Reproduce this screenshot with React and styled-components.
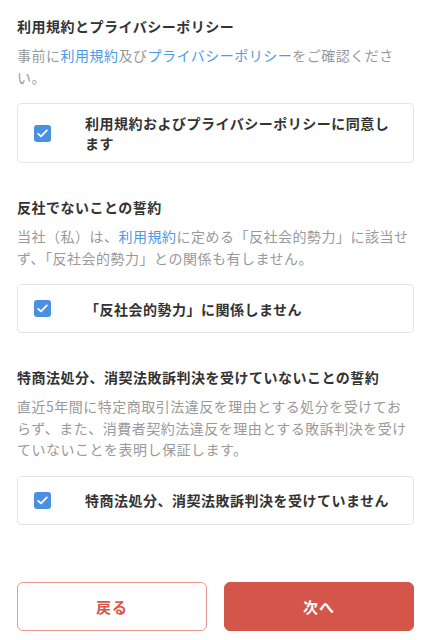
import React from "react";
import styled, { createGlobalStyle } from "styled-components";

const GlobalStyle = createGlobalStyle`
  html, body { margin: 0; padding: 0; background: #ffffff; }
  body {
    font-family: "Noto Sans CJK JP", "Noto Sans", sans-serif;
    -webkit-font-smoothing: antialiased;
  }
  * { box-sizing: border-box; }
`;

const Page = styled.div`
  width: 431px;
  min-height: 640px;
  padding: 16px 17px 10px 17px;
  display: flex;
  flex-direction: column;
`;

const Section = styled.section`
  & + & { margin-top: 34px; }
`;

const Title = styled.h2`
  margin: 0;
  font-size: 14px;
  letter-spacing: 0.5px;
  line-height: 20px;
  font-weight: 700;
  color: #333333;
`;

const Desc = styled.p`
  margin: 9px 0 0;
  font-size: 14px;
  letter-spacing: 0.5px;
  line-height: 21.5px;
  color: #999999;
`;

const Link = styled.span`
  color: #4a9be6;
`;

const Card = styled.label`
  margin-top: 15px;
  display: flex;
  align-items: center;
  min-height: 49px;
  padding: 9px 16px;
  border: 1px solid #e6e6e6;
  border-radius: 4px;
  background: #ffffff;
  cursor: pointer;
`;

const Box = styled.span`
  flex-shrink: 0;
  width: 17px;
  height: 17px;
  border-radius: 3px;
  background: ${(p) => (p.$checked ? "#4a90e2" : "#ffffff")};
  border: ${(p) => (p.$checked ? "none" : "1px solid #cccccc")};
  display: flex;
  align-items: center;
  justify-content: center;
  margin-right: 34px;
`;

const CardText = styled.span`
  font-size: 14px;
  letter-spacing: 0.5px;
  line-height: 20px;
  font-weight: 700;
  color: #333333;
`;

const Footer = styled.div`
  margin-top: 57px;
  display: grid;
  grid-template-columns: 1fr 1fr;
  gap: 17px;
`;

const Button = styled.button`
  height: 49px;
  border-radius: 6px;
  font-family: inherit;
  font-size: 15px;
  font-weight: 700;
  letter-spacing: 1px;
  cursor: pointer;
  border: 1px solid ${(p) => (p.$primary ? "#d4554a" : "#ea958d")};
  background: ${(p) => (p.$primary ? "#d4554a" : "#ffffff")};
  color: ${(p) => (p.$primary ? "#ffffff" : "#d6564b")};
`;

const Check = ({ checked = true }) => (
  <Box $checked={checked}>
    {checked && (
      <svg width="11" height="9" viewBox="0 0 11 9" fill="none">
        <polyline
          points="1.2,4.8 4,7.4 9.8,1.4"
          stroke="#ffffff"
          strokeWidth="1.8"
          strokeLinecap="round"
          strokeLinejoin="round"
        />
      </svg>
    )}
  </Box>
);

export default function App() {
  return (
    <>
      <GlobalStyle />
      <Page>
        <Section>
          <Title>利用規約とプライバシーポリシー</Title>
          <Desc>
            事前に<Link>利用規約</Link>及び<Link>プライバシーポリシー</Link>をご確認ください。
          </Desc>
          <Card>
            <Check />
            <CardText>利用規約およびプライバシーポリシーに同意します</CardText>
          </Card>
        </Section>
        <Section>
          <Title>反社でないことの誓約</Title>
          <Desc>
            当社（私）は、<Link>利用規約</Link>に定める「反社会的勢力」に該当せず、「反社会的勢力」との関係も有しません。
          </Desc>
          <Card>
            <Check />
            <CardText>「反社会的勢力」に関係しません</CardText>
          </Card>
        </Section>
        <Section>
          <Title>特商法処分、消契法敗訴判決を受けていないことの誓約</Title>
          <Desc>
            直近5年間に特定商取引法違反を理由とする処分を受けておらず、また、消費者契約法違反を理由とする敗訴判決を受けていないことを表明し保証します。
          </Desc>
          <Card>
            <Check />
            <CardText>特商法処分、消契法敗訴判決を受けていません</CardText>
          </Card>
        </Section>
        <Footer>
          <Button>戻る</Button>
          <Button $primary>次へ</Button>
        </Footer>
      </Page>
    </>
  );
}
